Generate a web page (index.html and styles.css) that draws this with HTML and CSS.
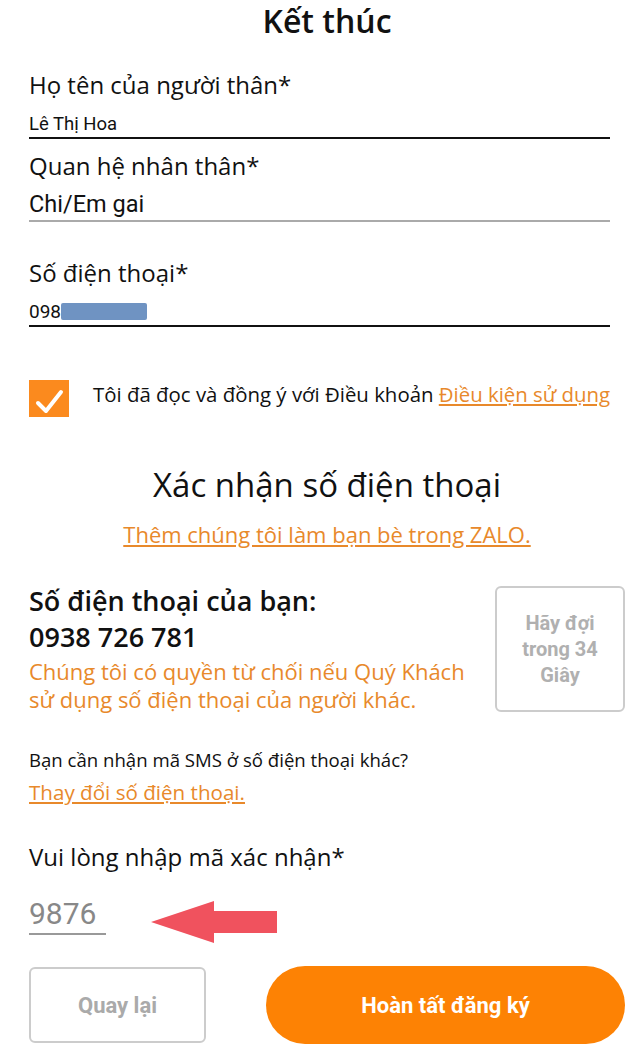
FILE: index.html
```html
<!DOCTYPE html>
<html lang="vi">
<head>
	<meta charset="UTF-8">
	<title>Kết thúc</title>
	<link rel="stylesheet" href="styles.css">
</head>
<body>
<div class="page">
   <h1 class="title">Kết thúc</h1>

   <!-- thông tin người thân -->
   <div class="label first">Họ tên của người thân*</div>
   <div class="value small dark">Lê Thị Hoa</div>

   <div class="label">Quan hệ nhân thân*</div>
   <div class="value big grey">Chi/Em gai</div>

   <div class="label far">Số điện thoại*</div>
   <div class="value phone dark">098<span class="mask"></span></div>

   <div class="agree">
      <div class="checkbox">
         <svg width="40" height="37" viewBox="0 0 40 37"><polyline points="9,23 17,31 32,12" fill="none" stroke="#fff" stroke-width="4" stroke-linecap="round" stroke-linejoin="round"/></svg>
      </div>
      <div class="agree-text">Tôi đã đọc và đồng ý với Điều khoản <a href="#">Điều kiện sử dụng</a></div>
   </div>

   <!-- xác nhận số điện thoại -->
   <h2 class="subtitle">Xác nhận số điện thoại</h2>
   <div class="zalo"><a href="#">Thêm chúng tôi làm bạn bè trong ZALO.</a></div>

   <div class="yourphone">
      <div class="yourphone-info">
         <div class="yp-title">Số điện thoại của bạn:</div>
         <div class="yp-number">0938 726 781</div>
         <div class="yp-note">Chúng tôi có quyền từ chối nếu Quý Khách sử dụng số điện thoại của người khác.</div>
      </div>
      <div class="wait">Hãy đợi<br>trong 34<br>Giây</div>
   </div>

   <div class="other">Bạn cần nhận mã SMS ở số điện thoại khác?</div>
   <div class="change"><a href="#">Thay đổi số điện thoại.</a></div>

   <div class="label code-label">Vui lòng nhập mã xác nhận*</div>
   <div class="code-row">
      <div class="code">9876</div>
      <svg class="arrow" width="126" height="42" viewBox="0 0 126 42"><polygon points="0,21 63,0 63,10 126,10 126,32 63,32 63,42" fill="#f0525e"/></svg>
   </div>

   <div class="buttons">
      <div class="btn back">Quay lại</div>
      <div class="btn done">Hoàn tất đăng ký</div>
   </div>
</div>
</body>
</html>
```

FILE: styles.css
```css
html,body{
	margin: 0;
	background: #fff;
}
.page{
	padding: 1px 15px 0 29px;
	font-family: "Open Sans", "Noto Sans", sans-serif;
	color: #111;
}
a{
	color: #e8892b;
	text-decoration: underline;
}
.title{
	margin: 0;
	font-size: 32px;
	font-weight: 600;
	line-height: 40px;
	text-align: center;
}
/* các ô nhập */
.label{
	font-size: 24px;
	line-height: 32px;
	margin-top: 11px;
}
.label.first{
	margin-top: 28px;
}
.label.far{
	margin-top: 35px;
}
.value{
	font-family: Roboto, "Liberation Sans", sans-serif;
	margin-right: 15px;
	color: #111;
}
.value.small{
	font-size: 18.5px;
	line-height: 24px;
	margin-top: 11px;
	padding-bottom: 1px;
}
.value.big{
	font-size: 23.5px;
	line-height: 28px;
	margin-top: 8px;
	padding-bottom: 2px;
}
.value.phone{
	font-size: 19px;
	line-height: 24px;
	margin-top: 11px;
	padding-bottom: 1px;
}
.value.dark{
	border-bottom: 2px solid #111;
}
.value.grey{
	border-bottom: 2px solid #aaa;
}
.mask{
	display: inline-block;
	width: 86px;
	height: 17px;
	background: #6f93c2;
	border-radius: 2px;
	vertical-align: -2px;
}
/* đồng ý điều khoản */
.agree{
	display: flex;
	align-items: flex-start;
	margin-top: 53px;
}
.checkbox{
	width: 40px;
	height: 37px;
	background: #fb8a1e;
	flex: none;
}
.checkbox svg{
	display: block;
}
.agree-text{
	margin: 0 0 0 24px;
	font-size: 20.4px;
	line-height: 28px;
	white-space: nowrap;
}
.subtitle{
	margin: 46px 0 0;
	font-size: 33px;
	font-weight: 400;
	line-height: 44px;
	text-align: center;
}
.zalo{
	margin-top: 13px;
	font-size: 22px;
	line-height: 28px;
	text-align: center;
}
/* số điện thoại của bạn */
.yourphone{
	display: flex;
	justify-content: space-between;
	align-items: flex-start;
	margin-top: 35px;
}
.yp-title,.yp-number{
	font-size: 27px;
	font-weight: 600;
	line-height: 36px;
}
.yp-note{
	margin-top: 2px;
	width: 450px;
	font-size: 22px;
	line-height: 28px;
	color: #e8892b;
}
.wait{
	margin-top: 3px;
	width: 126px;
	height: 122px;
	border: 2px solid #ccc;
	border-radius: 6px;
	display: flex;
	align-items: center;
	justify-content: center;
	text-align: center;
	font-family: Roboto, "Liberation Sans", sans-serif;
	font-weight: 700;
	font-size: 20px;
	line-height: 26px;
	color: #b0b0b0;
}
.other{
	margin-top: 35px;
	font-size: 18.6px;
	line-height: 24px;
}
.change{
	margin-top: 6px;
	font-size: 20.6px;
	line-height: 28px;
}
.label.code-label{
	margin-top: 35px;
}
/* mã xác nhận */
.code-row{
	display: flex;
	align-items: flex-start;
	margin-top: 23px;
}
.code{
	width: 77px;
	font-family: Roboto, "Liberation Sans", sans-serif;
	font-size: 30px;
	line-height: 36px;
	color: #888;
	padding-bottom: 1px;
	border-bottom: 2px solid #999;
}
.arrow{
	display: block;
	margin: 5px 0 0 45px;
}
/* nút */
.buttons{
	display: flex;
	justify-content: space-between;
	align-items: center;
	margin-top: 23px;
}
.btn{
	height: 78px;
	display: flex;
	align-items: center;
	justify-content: center;
	font-family: Roboto, "Liberation Sans", sans-serif;
	font-weight: 700;
	box-sizing: border-box;
}
.btn.back{
	width: 177px;
	height: 76px;
	border: 2px solid #ccc;
	border-radius: 6px;
	color: #aaa;
	font-size: 22px;
}
.btn.done{
	width: 359px;
	border-radius: 39px;
	background: #fd8204;
	color: #fff;
	font-size: 22px;
}
```
